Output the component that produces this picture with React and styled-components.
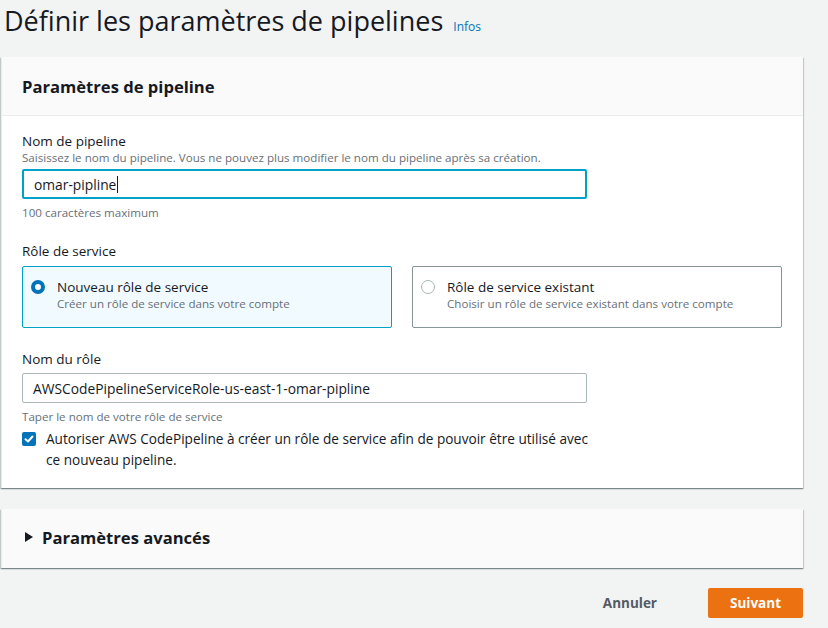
import React from 'react';
import styled, { createGlobalStyle } from 'styled-components';

const GlobalStyle = createGlobalStyle`
  html, body {
    margin: 0;
    padding: 0;
    background: #f2f3f3;
    font-family: "Open Sans", "Noto Sans", sans-serif;
    color: #16191f;
  }
  * { box-sizing: border-box; }
`;

const Page = styled.div`
  width: 828px;
  height: 628px;
  padding: 0 25px 0 1px;
  overflow: hidden;
`;

const TitleRow = styled.div`
  display: flex;
  align-items: baseline;
  gap: 10px;
  height: 57px;
  padding: 3px 0 0 3px;
`;

const PageTitle = styled.h1`
  margin: 0;
  font-size: 27px;
  font-weight: 400;
  line-height: 36px;
  color: #16191f;
`;

const InfoLink = styled.a`
  font-size: 12px;
  color: #0073bb;
  text-decoration: none;
`;

const Card = styled.section`
  background: #fff;
  border-left: 1px solid #eaeded;
  box-shadow: 0 1px 1px 0 rgba(0, 28, 36, 0.3), 1px 1px 1px 0 rgba(0, 28, 36, 0.15), -1px 1px 1px 0 rgba(0, 28, 36, 0.15);
  margin-bottom: ${p => p.$mb || 0}px;
`;

const CardHeader = styled.header`
  display: flex;
  align-items: center;
  gap: 9px;
  height: ${p => p.$h || 59}px;
  padding: 0 20px ${p => p.$pb || 0}px;
  background: #fafafa;
  border-bottom: ${p => (p.$bordered ? '1px solid #eaeded' : 'none')};
`;

const CardTitle = styled.h2`
  margin: 0;
  font-size: 16.6px;
  font-weight: 700;
  color: #16191f;
`;

const CardBody = styled.div`
  padding: 16px 20px 18px;
`;

const Label = styled.div`
  font-size: 13.5px;
  line-height: 18px;
  color: #16191f;
`;

const Desc = styled.div`
  font-size: 11.6px;
  line-height: 16px;
  color: #687078;
`;

const Field = styled.div`
  display: flex;
  flex-direction: column;
  margin-bottom: ${p => p.$mb || 0}px;
`;

const Input = styled.div`
  width: 565px;
  height: 30px;
  margin: ${p => (p.$focused ? '3px 0 6px' : '5px 0 6px')};
  padding: 0 10px;
  display: flex;
  align-items: center;
  font-size: 13.8px;
  color: #16191f;
  background: #fff;
  border: ${p => (p.$focused ? '2px solid #00a1c9' : '1px solid #aab7b8')};
  border-radius: 2px;
`;

const Caret = styled.span`
  display: inline-block;
  width: 1px;
  height: 17px;
  background: #16191f;
  margin-left: 1px;
`;

const Tiles = styled.div`
  display: grid;
  grid-template-columns: 370px 370px;
  gap: 20px;
  margin-top: 6px;
`;

const Tile = styled.div`
  display: flex;
  gap: 12px;
  height: 62px;
  padding: 11px 12px 0 8px;
  border: 1px solid ${p => (p.$selected ? '#00a1c9' : '#879596')};
  background: ${p => (p.$selected ? '#f1faff' : '#fff')};
  border-radius: 2px;
`;

const Radio = styled.span`
  flex: none;
  width: 14px;
  height: 14px;
  margin-top: 2px;
  border-radius: 50%;
  border: ${p => (p.$checked ? '4px solid #0073bb' : '1px solid #aab7b8')};
  background: #fff;
`;

const TileText = styled.div`
  display: flex;
  flex-direction: column;
`;

const TileTitle = styled.div`
  font-size: 13.5px;
  line-height: 18px;
`;

const CheckRow = styled.label`
  display: flex;
  gap: 10px;
  margin-top: 6px;
`;

const CheckBox = styled.span`
  flex: none;
  width: 14px;
  height: 14px;
  margin-top: 1px;
  border-radius: 2px;
  background: #0073bb;
  display: flex;
  align-items: center;
  justify-content: center;
`;

const CheckText = styled.span`
  width: 548px;
  font-size: 13.6px;
  line-height: 21px;
  margin-top: -3px;
`;

const Triangle = styled.span`
  width: 0;
  height: 0;
  border-top: 5px solid transparent;
  border-bottom: 5px solid transparent;
  border-left: 8px solid #16191f;
  margin-left: 3px;
`;

const Actions = styled.div`
  display: flex;
  justify-content: flex-end;
  align-items: center;
  gap: 31px;
  margin-top: 20px;
`;

const Button = styled.button`
  height: 30px;
  padding: 0 20px;
  border: none;
  border-radius: 2px;
  font-family: inherit;
  font-size: 13.5px;
  font-weight: 700;
  color: ${p => (p.$primary ? '#fff' : '#545b64')};
  background: ${p => (p.$primary ? '#ec7211' : 'transparent')};
  width: ${p => (p.$primary ? '95px' : 'auto')};
`;

export default function App() {
  return (
    <>
      <GlobalStyle />
      <Page>
        <TitleRow>
          <PageTitle>Définir les paramètres de pipelines</PageTitle>
          <InfoLink href="#">Infos</InfoLink>
        </TitleRow>

        <Card $mb={21}>
          <CardHeader $bordered>
            <CardTitle>Paramètres de pipeline</CardTitle>
          </CardHeader>
          <CardBody>
            <Field $mb={21}>
              <Label>Nom de pipeline</Label>
              <Desc>Saisissez le nom du pipeline. Vous ne pouvez plus modifier le nom du pipeline après sa création.</Desc>
              <Input $focused>
                omar-pipline<Caret />
              </Input>
              <Desc>100 caractères maximum</Desc>
            </Field>

            <Field $mb={22}>
              <Label>Rôle de service</Label>
              <Tiles>
                <Tile $selected>
                  <Radio $checked />
                  <TileText>
                    <TileTitle>Nouveau rôle de service</TileTitle>
                    <Desc>Créer un rôle de service dans votre compte</Desc>
                  </TileText>
                </Tile>
                <Tile>
                  <Radio />
                  <TileText>
                    <TileTitle>Rôle de service existant</TileTitle>
                    <Desc>Choisir un rôle de service existant dans votre compte</Desc>
                  </TileText>
                </Tile>
              </Tiles>
            </Field>

            <Field>
              <Label>Nom du rôle</Label>
              <Input>AWSCodePipelineServiceRole-us-east-1-omar-pipline</Input>
              <Desc>Taper le nom de votre rôle de service</Desc>
              <CheckRow>
                <CheckBox>
                  <svg width="10" height="10" viewBox="0 0 10 10">
                    <path d="M1.5 5.2 L4 7.5 L8.5 2.5" fill="none" stroke="#fff" strokeWidth="2" strokeLinecap="round" strokeLinejoin="round" />
                  </svg>
                </CheckBox>
                <CheckText>
                  Autoriser AWS CodePipeline à créer un rôle de service afin de pouvoir être utilisé avec ce nouveau pipeline.
                </CheckText>
              </CheckRow>
            </Field>
          </CardBody>
        </Card>

        <Card>
          <CardHeader $h={59} $pb={3}>
            <Triangle />
            <CardTitle>Paramètres avancés</CardTitle>
          </CardHeader>
        </Card>

        <Actions>
          <Button>Annuler</Button>
          <Button $primary>Suivant</Button>
        </Actions>
      </Page>
    </>
  );
}
